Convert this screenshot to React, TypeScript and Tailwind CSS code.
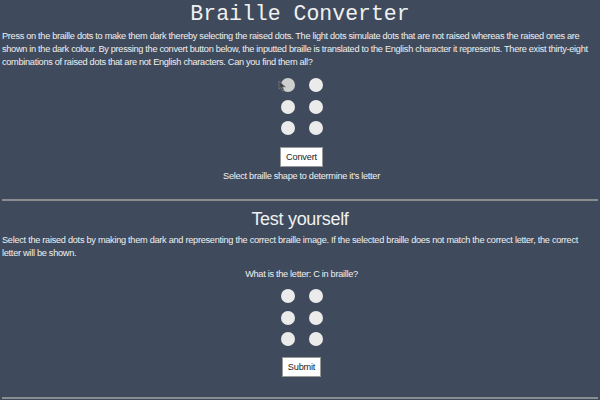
import { useState } from "react";

const Dot = ({ active, hover, onClick }: { active: boolean; hover?: boolean; onClick: () => void }) => (
  <button
    onClick={onClick}
    className={`block h-[14px] w-[14px] rounded-full ${active ? "bg-[#222]" : hover ? "bg-[#cfcfcf]" : "bg-[#ebebeb]"}`}
  />
);

const Cell = ({ hoverFirst = false }: { hoverFirst?: boolean }) => {
  const [dots, setDots] = useState<boolean[]>([false, false, false, false, false, false]);
  const toggle = (i: number) => setDots((d) => d.map((v, j) => (j === i ? !v : v)));
  return (
    <div className="grid grid-cols-2 gap-x-[14px] gap-y-[7.5px]">
      {dots.map((v, i) => (
        <div key={i} className="relative h-[14px] w-[14px]">
          <Dot active={v} hover={hoverFirst && i === 0} onClick={() => toggle(i)} />
          {hoverFirst && i === 0 && (
            <svg className="absolute left-[-4px] top-[2px]" width="10" height="12" viewBox="0 0 10 12">
              <path d="M2 1 L2 9 L4 7.5 L5.5 11 L7 10.4 L5.6 7 L8.5 7 Z" fill="#444" stroke="#888" strokeWidth="0.6" />
            </svg>
          )}
        </div>
      ))}
    </div>
  );
};

export default function App() {
  return (
    <div className="h-[400px] w-[600px] overflow-hidden bg-[#3f4b5d] px-[2px] text-[#f0f0f0] [font-family:'Liberation_Sans',Arial,sans-serif]">
      <h1 className="pt-[1px] text-center text-[21.5px] leading-[26px] [font-family:'Liberation_Mono',monospace]">
        Braille Converter
      </h1>
      <p className="mt-[3px] text-[9.2px] leading-[13px] tracking-[-0.3px]">
        Press on the braille dots to make them dark thereby selecting the raised dots. The light dots simulate dots that are not raised whereas the raised ones are shown in the dark colour. By pressing the convert button below, the inputted braille is translated to the English character it represents. There exist thirty-eight combinations of raised dots that are not English characters. Can you find them all?
      </p>
      <div className="ml-[3px] mt-[9px] flex flex-col items-center">
        <Cell hoverFirst />
        <button className="mt-[12px] border border-[#999] bg-white px-[5px] py-[3px] text-[9.2px] leading-[12px] tracking-[-0.2px] text-[#222]">
          Convert
        </button>
        <p className="mt-[3px] text-[9.2px] leading-[13px] tracking-[-0.3px]">Select braille shape to determine it's letter</p>
      </div>
      <hr className="mt-[16px] border-t-2 border-[#8a8d90]" />
      <h2 className="mt-[6px] text-center text-[18px] leading-[24px] tracking-[-0.3px]">Test yourself</h2>
      <p className="mt-[3px] text-[9.2px] leading-[12.5px] tracking-[-0.28px]">
        Select the raised dots by making them dark and representing the correct braille image. If the selected braille does not match the correct letter, the correct letter will be shown.
      </p>
      <div className="ml-[3px] mt-[9px] flex flex-col items-center">
        <p className="text-[9.2px] leading-[13px] tracking-[-0.3px]">What is the letter: C in braille?</p>
        <div className="mt-[8px]">
          <Cell />
        </div>
        <button className="mt-[11px] border border-[#999] bg-white px-[5px] py-[3px] text-[9.2px] leading-[12px] tracking-[-0.2px] text-[#222]">
          Submit
        </button>
      </div>
      <hr className="mt-[20px] border-t-2 border-[#8a8d90]" />
    </div>
  );
}
